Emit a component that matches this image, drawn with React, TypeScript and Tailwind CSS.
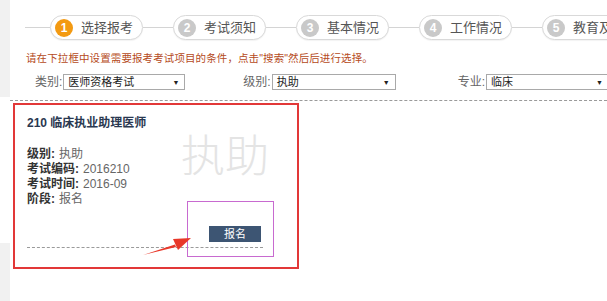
import React from 'react';

const steps = [
  { n: 1, label: '选择报考', active: true },
  { n: 2, label: '考试须知' },
  { n: 3, label: '基本情况' },
  { n: 4, label: '工作情况' },
  { n: 5, label: '教育及学习经历' },
];

const filters = [
  { label: '类别:', value: '医师资格考试', ml: 'ml-[25px]', w: 'w-[122px]' },
  { label: '级别:', value: '执助', ml: 'ml-[58px]', w: 'w-[124px]' },
  { label: '专业:', value: '临床', ml: 'ml-[62px]', w: 'w-[123px]' },
];

const info = [
  { k: '级别:', v: '执助' },
  { k: '考试编码:', v: '2016210' },
  { k: '考试时间:', v: '2016-09' },
  { k: '阶段:', v: '报名' },
];

const App: React.FC = () => {
  return (
    <div className="flex h-[301px] w-[607px] overflow-hidden bg-white font-['Liberation_Sans','Noto_Sans_CJK_SC',sans-serif]">
      {/* left gutter */}
      <div className="flex w-[10px] shrink-0 flex-col">
        <div className="h-[97px] bg-[#f1f1f1]" />
        <div className="flex-1" />
        <div className="h-[58px] bg-[#f1f1f1]" />
      </div>

      <div className="flex min-w-0 flex-1 flex-col overflow-hidden">
        {/* steps */}
        <div className="flex items-center whitespace-nowrap pt-[15px]">
          <div className="ml-[15px] h-px w-[25px] shrink-0 bg-[#d4d4d4]" />
          {steps.map((s, i) => (
            <React.Fragment key={s.n}>
              {i > 0 && <div className="h-px w-[30px] shrink-0 bg-[#d4d4d4]" />}
              <div className="flex h-[25px] w-[93px] shrink-0 items-center rounded-full border border-[#d9d9d9] bg-white pl-[4px] shadow-[0_1px_1px_rgba(0,0,0,0.05)]">
                <span
                  className={
                    'flex h-[18px] w-[18px] shrink-0 items-center justify-center rounded-full text-[12px] font-bold text-white ' +
                    (s.active ? 'bg-[#f39a12]' : 'bg-[#c9c9c9]')
                  }
                >
                  {s.n}
                </span>
                <span className="ml-[8px] text-[13px] text-[#555]">{s.label}</span>
              </div>
            </React.Fragment>
          ))}
        </div>

        {/* notice */}
        <p className="mt-[11px] whitespace-nowrap pl-[16px] text-[10.5px] leading-[14px] tracking-[0.1px] text-[#b54a22]">
          请在下拉框中设置需要报考考试项目的条件，点击"搜索"然后后进行选择。
        </p>

        {/* filters */}
        <div className="mt-[9px] flex h-[16px] items-center whitespace-nowrap">
          {filters.map((f) => (
            <div key={f.label} className={'flex items-center ' + f.ml}>
              <span className="pr-[1px] text-[12px] text-[#666]">{f.label}</span>
              <div className={'flex h-[16px] items-center justify-between border border-[#a9a9a9] bg-white pl-[4px] pr-[5px] ' + f.w}>
                <span className="text-[11px] leading-none text-[#222]">{f.value}</span>
                <span className="text-[7px] leading-none text-[#222]">▼</span>
              </div>
            </div>
          ))}
        </div>

        <div className="mt-[10px] border-t border-dashed border-[#9a9a9a]" />

        {/* exam card */}
        <div className="relative ml-[3px] mt-[2px] box-border h-[166px] w-[286px] border-2 border-[#e23838] px-[12px] pt-[10px]">
          <div className="pointer-events-none absolute left-[166px] top-[26px] font-['Noto_Sans_CJK_SC',sans-serif] text-[44px] font-light leading-none text-[#e4e4e4]">
            执助
          </div>

          <h3 className="relative text-[12px] font-bold leading-[16px] text-[#2a3850]">210 临床执业助理医师</h3>

          <div className="relative mt-[16px] flex flex-col text-[12px] leading-[15px]">
            {info.map((r) => (
              <div key={r.k} className="flex whitespace-nowrap">
                <span className="font-bold text-[#333]">{r.k}</span>
                <span className="ml-[4px] text-[#666]">{r.v}</span>
              </div>
            ))}
          </div>

          <div className="w-[236px]">
            <div className="mt-[19px] flex justify-end pr-[2px]">
              <button className="h-[16px] w-[52px] bg-[#3d5573] text-[11px] leading-[16px] text-white">报名</button>
            </div>
            <div className="mt-[5px] border-t border-dashed border-[#9a9a9a]" />
          </div>

          {/* annotation box */}
          <div className="absolute left-[172px] top-[96px] h-[56px] w-[87px] border border-[#c86ad0]" />

          {/* annotation arrow */}
          <svg className="absolute left-0 top-0 overflow-visible" width="270" height="160" viewBox="0 0 270 160">
            <path d="M128 150 L160 139.5 L161 142 Z" fill="#e8382a" />
            <path d="M176 133 L158 134 L163 145 Z" fill="#e8382a" />
          </svg>
        </div>
      </div>
    </div>
  );
};

export default App;
